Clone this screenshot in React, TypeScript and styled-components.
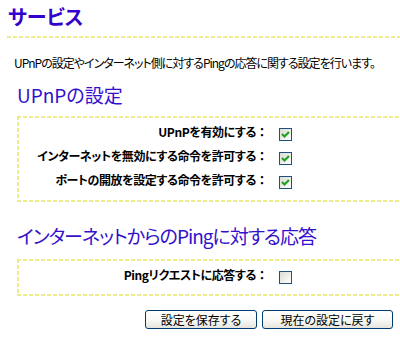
import React from "react";
import styled, { createGlobalStyle } from "styled-components";

const Global = createGlobalStyle`
  html, body { margin: 0; padding: 0; background: #fff; overflow: hidden; }
  body { font-family: "Noto Sans CJK JP", "Noto Sans", sans-serif; color: #000; }
`;

const DASH = "#ecec8a";
const hDash = `repeating-linear-gradient(to right, ${DASH} 0 4px, transparent 4px 6px)`;
const vDash = `repeating-linear-gradient(to bottom, ${DASH} 0 4px, transparent 4px 6px)`;

const Page = styled.div`
  width: 440px;
  display: flex;
  flex-direction: column;
`;

const Title = styled.h1`
  margin: 5px 0 0 8px;
  font-size: 20px;
  line-height: 24px;
  font-weight: bold;
  color: #3300cc;
  font-feature-settings: "palt";
`;

const TitleRule = styled.div`
  margin: 7px 0 0 7px;
  height: 2px;
  background: ${hDash};
`;

const Description = styled.p`
  margin: 17px 0 0 14px;
  font-size: 12px;
  line-height: 16px;
  letter-spacing: -1px;
  font-feature-settings: "palt";
  white-space: nowrap;
`;

const SectionHeading = styled.h2<{ $top: number; $tight?: boolean }>`
  margin: ${(p) => p.$top}px 0 0 17px;
  font-size: 19px;
  line-height: 24px;
  font-weight: normal;
  color: #3311cc;
  letter-spacing: ${(p) => (p.$tight ? "-1px" : "0")};
  font-feature-settings: "palt";
  white-space: nowrap;
`;

const Box = styled.div<{ $top: number; $bottom: number }>`
  margin: ${(p) => p.$top}px 0 0 17px;
  padding: 6px 2px ${(p) => p.$bottom}px 2px;
  display: flex;
  flex-direction: column;
  background:
    ${hDash} top left / 100% 2px no-repeat,
    ${hDash} bottom left / 100% 2px no-repeat,
    ${vDash} top left / 2px 100% no-repeat,
    ${vDash} top right / 2px 100% no-repeat;
`;

const Row = styled.div`
  display: grid;
  grid-template-columns: 249px auto;
  align-items: center;
  height: 24px;
`;

const Label = styled.span`
  text-align: right;
  font-size: 12px;
  font-weight: bold;
  line-height: 16px;
  letter-spacing: -0.4px;
  font-feature-settings: "palt";
  position: relative;
  top: -2px;
  white-space: nowrap;
`;

const Colon = styled.span`
  font-feature-settings: normal;
  letter-spacing: 0;
`;

const CheckBox = styled.span<{ $checked: boolean }>`
  margin-left: 11px;
  width: 11px;
  height: 11px;
  border: 1px solid #1c5180;
  background: linear-gradient(135deg, #dcdcd5 0%, #f4f4f0 70%, #ffffff 100%);
  display: flex;
  align-items: center;
  justify-content: center;
`;

const Buttons = styled.div`
  display: flex;
  gap: 5px;
  margin: 14px 0 0 145px;
`;

const Button = styled.button<{ $w: number }>`
  width: ${(p) => p.$w}px;
  height: 19px;
  padding: 0;
  border: 1px solid #003c74;
  border-radius: 3px;
  background: linear-gradient(to bottom, #ffffff 0%, #f8f8f4 55%, #e6e4dc 100%);
  font-family: "Noto Sans CJK JP", sans-serif;
  font-size: 12px;
  line-height: 17px;
  color: #000;
  font-feature-settings: "palt";
`;

const Check = ({ checked }: { checked: boolean }) => (
  <CheckBox $checked={checked}>
    {checked && (
      <svg width="9" height="9" viewBox="0 0 9 9">
        <path d="M1 4 L3.5 6.5 L8 2" fill="none" stroke="#21a121" strokeWidth="2.2" />
      </svg>
    )}
  </CheckBox>
);

const Field = ({ label, checked }: { label: string; checked: boolean }) => (
  <Row>
    <Label>
      {label}
      <Colon>：</Colon>
    </Label>
    <Check checked={checked} />
  </Row>
);

export default function App() {
  return (
    <Page>
      <Global />
      <Title>サービス</Title>
      <TitleRule />
      <Description>UPnPの設定やインターネット側に対するPingの応答に関する設定を行います。</Description>
      <SectionHeading $top={12}>UPnPの設定</SectionHeading>
      <Box $top={9} $bottom={8}>
        <Field label="UPnPを有効にする" checked />
        <Field label="インターネットを無効にする命令を許可する" checked />
        <Field label="ポートの開放を設定する命令を許可する" checked />
      </Box>
      <SectionHeading $top={22} $tight>
        インターネットからのPingに対する応答
      </SectionHeading>
      <Box $top={11} $bottom={7}>
        <Field label="Pingリクエストに応答する" checked={false} />
      </Box>
      <Buttons>
        <Button $w={112}>設定を保存する</Button>
        <Button $w={131}>現在の設定に戻す</Button>
      </Buttons>
    </Page>
  );
}
